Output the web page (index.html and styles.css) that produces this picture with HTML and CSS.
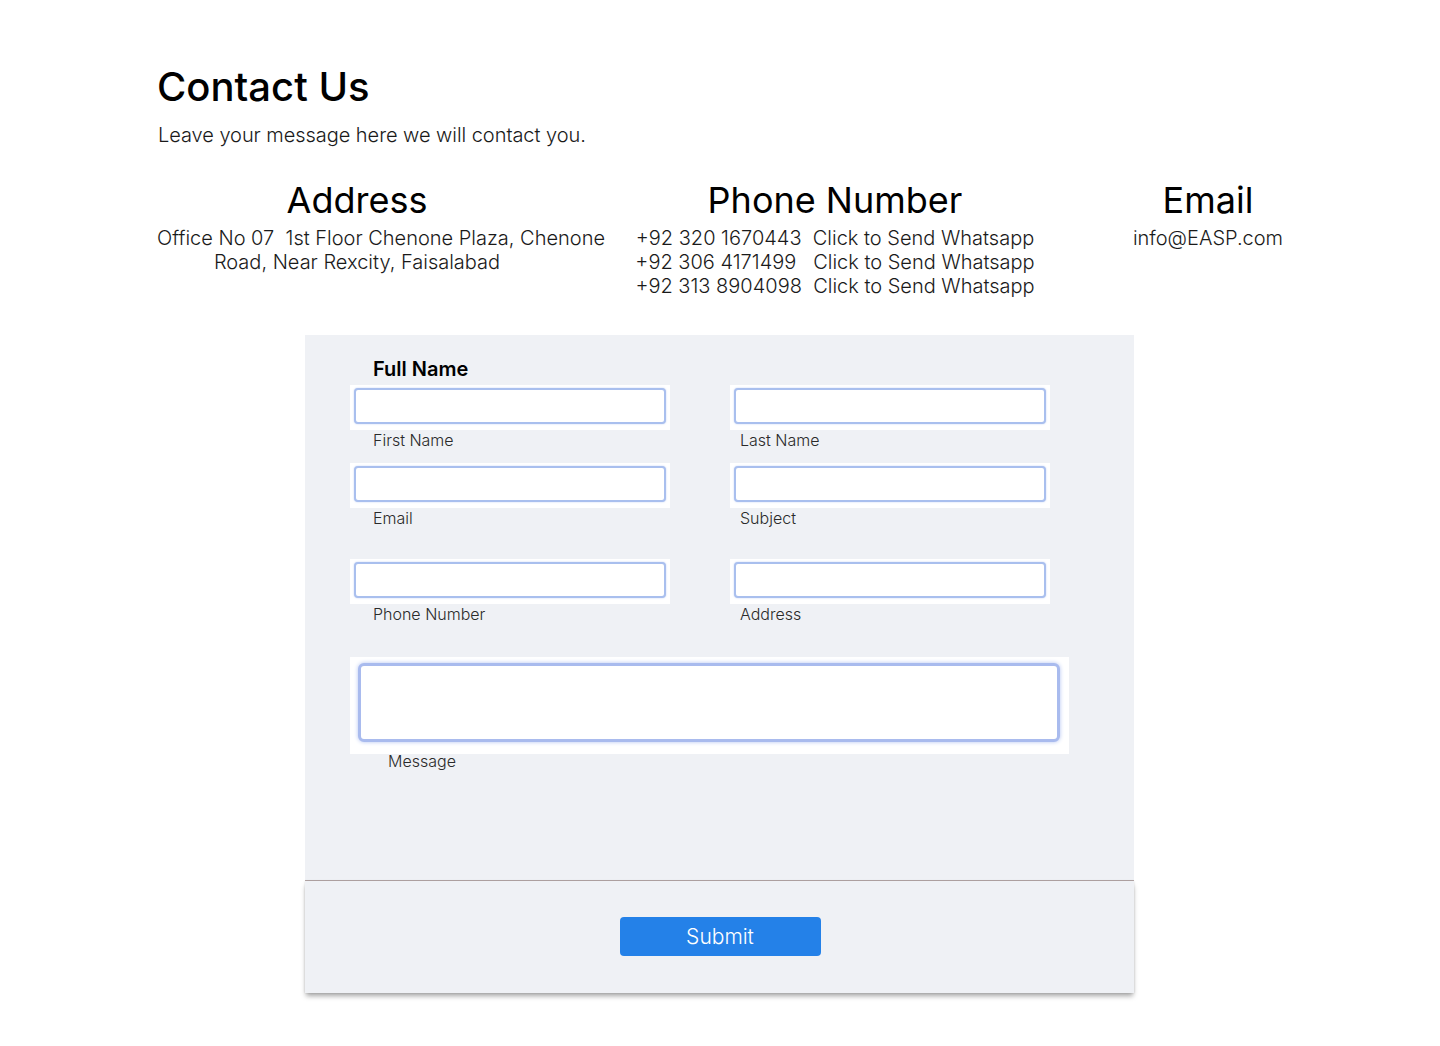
FILE: index.html
```html
<!DOCTYPE html>
<html lang="en">
<head>
<meta charset="utf-8">
<title>Contact Us</title>
<link rel="stylesheet" href="styles.css">
</head>
<body>
<header class="intro">
  <h1 class="title">Contact Us</h1>
  <p class="subtitle">Leave your message here we will contact you.</p>
</header>

<section class="info">
  <div class="info-col info-address">
    <h2 class="info-head">Address</h2>
    <p class="info-text"><span class="nowrap">Office No 07&nbsp; 1st Floor Chenone Plaza, Chenone</span> Road, Near Rexcity, Faisalabad</p>
  </div>
  <div class="info-col info-phone">
    <h2 class="info-head">Phone Number</h2>
    <p class="info-text nowrap">+92 320 1670443&nbsp; Click to Send Whatsapp<br>+92 306 4171499&nbsp;&nbsp; Click to Send Whatsapp<br>+92 313 8904098&nbsp; Click to Send Whatsapp</p>
  </div>
  <div class="info-col info-email">
    <h2 class="info-head">Email</h2>
    <p class="info-text">info@EASP.com</p>
  </div>
</section>

<form class="form-card">
  <div class="form-body">
    <div class="group-title">Full Name</div>
    <div class="row row-1">
      <div class="field field-left">
        <div class="box"><input class="input" type="text"></div>
        <label class="field-label">First Name</label>
      </div>
      <div class="field field-right">
        <div class="box"><input class="input" type="text"></div>
        <label class="field-label">Last Name</label>
      </div>
    </div>
    <div class="row row-2">
      <div class="field field-left">
        <div class="box"><input class="input" type="text"></div>
        <label class="field-label">Email</label>
      </div>
      <div class="field field-right">
        <div class="box"><input class="input" type="text"></div>
        <label class="field-label">Subject</label>
      </div>
    </div>
    <div class="row row-3">
      <div class="field field-left">
        <div class="box"><input class="input" type="text"></div>
        <label class="field-label">Phone Number</label>
      </div>
      <div class="field field-right">
        <div class="box"><input class="input" type="text"></div>
        <label class="field-label">Address</label>
      </div>
    </div>
    <div class="message">
      <div class="box-msg"><textarea class="textarea"></textarea></div>
      <label class="field-label msg-label">Message</label>
    </div>
  </div>
  <div class="form-foot">
    <button type="button" class="submit">Submit</button>
  </div>
</form>
</body>
</html>
```

FILE: styles.css
```css
* { box-sizing: border-box; }

body {
  margin: 0;
  background: #ffffff;
  font-family: Inter, "Noto Sans", Arial, sans-serif;
  color: #111;
}

.intro {
  padding: 63px 0 0 158px;
}

.title {
  margin: 0 0 0 -1px;
  font-size: 40px;
  font-weight: 500;
  line-height: 48px;
  color: #000;
}

.subtitle {
  margin: 12px 0 0;
  font-size: 20px;
  font-weight: 300;
  line-height: 24px;
  letter-spacing: -0.05px;
  color: #1a1a1a;
}

.info {
  display: flex;
  margin: 31px 0 0 157px;
}

.info-col {
  text-align: center;
}

.info-address { width: 400px; }
.info-phone { width: 400px; margin-left: 78px; }
.info-email { width: 346px; }

.info-head {
  margin: 0;
  font-size: 36px;
  font-weight: 400;
  line-height: 44px;
  color: #000;
}

.info-text {
  margin: 4px 0 0;
  font-size: 20px;
  font-weight: 300;
  line-height: 24px;
  color: #1a1a1a;
}

.nowrap { white-space: nowrap; }

.form-card {
  width: 829px;
  margin: 37px 0 40px 305px;
}

.form-body {
  height: 546px;
  background: #eff1f5;
  padding: 22px 0 0 45px;
  border-bottom: 1px solid #b5a7a7;
}

.group-title {
  margin-left: 23px;
  font-size: 20px;
  font-weight: 600;
  line-height: 24px;
  color: #000;
}

.row {
  display: flex;
  gap: 60px;
}
.row-1 { margin-top: 4px; }
.row-2 { margin-top: 13px; }
.row-3 { margin-top: 31px; }

.field { width: 320px; }

.box {
  background: #fff;
  padding: 3px 4px 6px;
}

.input {
  display: block;
  width: 312px;
  height: 36px;
  margin: 0;
  border: 2px solid #a9bfee;
  border-radius: 4px;
  background: #fff;
  box-shadow: 0 0 2px #c2d2f5;
  outline: none;
}

.field-label {
  display: block;
  font-size: 16px;
  font-weight: 300;
  line-height: 20px;
  color: #2a2a2a;
}
.field-left .field-label { margin-left: 23px; }
.field-right .field-label { margin-left: 10px; }

.message {
  margin-top: 33px;
}

.box-msg {
  width: 719px;
  background: #fff;
  padding: 6px 9px 12px 8px;
}

.textarea {
  display: block;
  width: 702px;
  height: 79px;
  margin: 0;
  border: 3px solid #a9bbee;
  border-radius: 6px;
  background: #fff;
  box-shadow: 0 0 4px #b3c4f2;
  resize: none;
  outline: none;
}

.msg-label {
  margin: -3px 0 0 38px;
}

.form-foot {
  height: 112px;
  background: #eff1f5;
  display: flex;
  justify-content: center;
  padding: 36px 0 0 1px;
  box-shadow: 0 4px 5px -1px rgba(0, 0, 0, 0.35), 0 0 2px rgba(0, 0, 0, 0.12);
}

.submit {
  width: 201px;
  height: 39px;
  border: none;
  border-radius: 4px;
  background: #2481e8;
  color: #fff;
  font-family: Inter, "Noto Sans", Arial, sans-serif;
  font-size: 21px;
  font-weight: 300;
  line-height: 24px;
  cursor: pointer;
}
```
